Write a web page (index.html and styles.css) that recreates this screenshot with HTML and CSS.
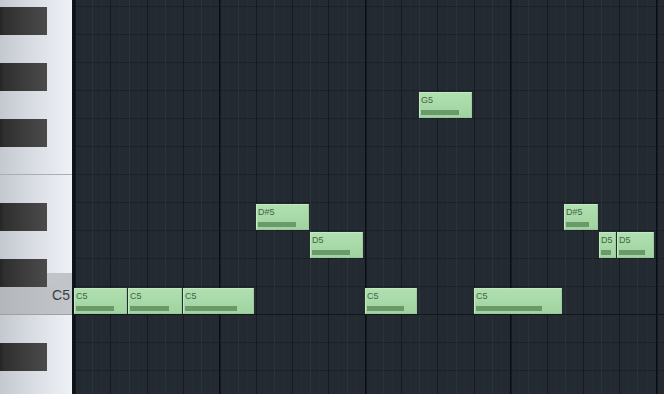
FILE: index.html
```html
<html>
    <head>
        <link rel="stylesheet" href="styles.css">
    </head>
    <body>
        <div class="roll">

            <div class="keys">
                <div class="keys-inner">
                    <div class="key"></div>
                    <div class="key"><div class="black"></div></div>
                    <div class="key"></div>
                    <div class="key"><div class="black"></div></div>
                    <div class="key"></div>
                    <div class="key"><div class="black"></div></div>
                    <div class="key f"></div>
                    <div class="key"></div>
                    <div class="key"><div class="black"></div></div>
                    <div class="key"></div>
                    <div class="key cs"><div class="black"></div></div>
                    <div class="key c5"><span class="label">C5</span></div>
                    <div class="key"></div>
                    <div class="key"><div class="black"></div></div>
                    <div class="key"></div>
                </div>
            </div>

            <div class="grid">
                <div class="note" style="left:0px;top:288px;width:53px"><span class="name">C5</span><span class="vel"></span></div>
                <div class="note" style="left:54px;top:288px;width:54px"><span class="name">C5</span><span class="vel"></span></div>
                <div class="note" style="left:109px;top:288px;width:71px"><span class="name">C5</span><span class="vel"></span></div>
                <div class="note" style="left:182px;top:204px;width:53px"><span class="name">D#5</span><span class="vel"></span></div>
                <div class="note" style="left:236px;top:232px;width:53px"><span class="name">D5</span><span class="vel"></span></div>
                <div class="note" style="left:291px;top:288px;width:52px"><span class="name">C5</span><span class="vel"></span></div>
                <div class="note" style="left:345px;top:92px;width:53px"><span class="name">G5</span><span class="vel"></span></div>
                <div class="note" style="left:400px;top:288px;width:88px"><span class="name">C5</span><span class="vel"></span></div>
                <div class="note" style="left:490px;top:204px;width:34px"><span class="name">D#5</span><span class="vel"></span></div>
                <div class="note" style="left:525px;top:232px;width:17px"><span class="name">D5</span><span class="vel"></span></div>
                <div class="note" style="left:543px;top:232px;width:37px"><span class="name">D5</span><span class="vel"></span></div>
            </div>

        </div>
    </body>
</html>
```

FILE: styles.css
```css
body {
    margin: 0;
    background: #232a32;
    overflow: hidden;
    font-family: "Liberation Sans", Arial, sans-serif;
}

.roll {
    display: flex;
    width: 664px;
    height: 394px;
    overflow: hidden;
}

/* keyboard */

.keys {
    width: 72px;
    flex: none;
    border-right: 2px solid #10151b;
    overflow: hidden;
    background: linear-gradient(to right, #c4c8cf, #dfe3e9 60%, #eef1f6);
}

.keys-inner {
    margin-top: -21px;
    display: flex;
    flex-direction: column;
}

.key {
    height: 28px;
    flex: none;
    display: flex;
}

.key .black {
    width: 47px;
    height: 28px;
    background: linear-gradient(to right, #252525 0, #2f2f2f 4px, #3c3c3c 50%, #4b4b4b);
}

.key.f {
    box-shadow: inset 0 -1px 0 #a9aeb5;
}

.key.cs {
    background: linear-gradient(to bottom, transparent 14px, #c1c4c8 14px);
}

.key.c5 {
    background: linear-gradient(to right, #b3b6bb, #c3c6ca);
    box-shadow: inset 0 -1px 0 #9ea2a8;
    justify-content: flex-end;
}

.label {
    font-size: 14px;
    line-height: 14px;
    color: #3a3e45;
    padding: 1px 2px 0 0;
}

/* note grid */

.grid {
    flex: 1;
    position: relative;
    background:
        linear-gradient(to bottom, transparent 314px, #12161b 314px, #12161b 315px, transparent 315px),
        repeating-linear-gradient(to right, #0a0d11 0, #0a0d11 1px, #151a20 1px, #151a20 2px, transparent 2px, transparent 145.4px),
        repeating-linear-gradient(to right, #161b21 0, #161b21 1px, transparent 1px, transparent 36.35px),
        repeating-linear-gradient(to right, #2a323b 0, #2a323b 1px, transparent 1px, transparent 18.175px),
        repeating-linear-gradient(to right, #262d35 0, #262d35 1px, transparent 1px, transparent 9.0875px),
        repeating-linear-gradient(to bottom, transparent 0, transparent 6px, #1b2027 6px, #1b2027 7px, transparent 7px, transparent 28px),
        #232a32;
}

.note {
    position: absolute;
    height: 26px;
    box-sizing: border-box;
    border: 1px solid #c2e9c2;
    border-right-color: #9ccb9c;
    border-bottom-color: #98c898;
    background: linear-gradient(#b0dfb0, #a0d3a0);
    padding: 2px 1px 2px 1px;
    display: flex;
    flex-direction: column;
    overflow: hidden;
}

.name {
    font-size: 9px;
    line-height: 10px;
    color: #456345;
    white-space: nowrap;
}

.vel {
    margin-top: auto;
    height: 5px;
    width: 78%;
    background: #6a9a6a;
}
```
